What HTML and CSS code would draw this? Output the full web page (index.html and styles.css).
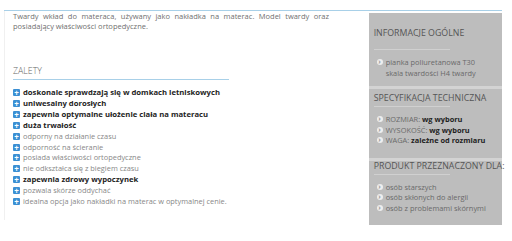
FILE: index.html
```html
<!DOCTYPE html>
<html lang="pl">
<head>
    <meta charset="UTF-8">
    <title>Twardy wkład do materaca</title>
    <link rel="stylesheet" href="styles.css">
</head>
<body>
    <div class="product">
        <div class="main">
            <p class="intro">Twardy wkład do materaca, używany jako nakładka na materac. Model twardy oraz posiadający właściwości ortopedyczne.</p>
            <h3 class="section-title">ZALETY</h3>
            <ul class="pros">
                <li class="strong">doskonale sprawdzają się w domkach letniskowych</li>
                <li class="strong">uniwesalny dorosłych</li>
                <li class="strong">zapewnia optymalne ułożenie ciała na materacu</li>
                <li class="strong">duża trwałość</li>
                <li>odporny na działanie czasu</li>
                <li>odporność na ścieranie</li>
                <li>posiada właściwości ortopedyczne</li>
                <li>nie odkształca się z biegiem czasu</li>
                <li class="strong">zapewnia zdrowy wypoczynek</li>
                <li>pozwala skórze oddychać</li>
                <li>idealna opcja jako nakładki na materac w optymalnej cenie.</li>
            </ul>
        </div>
        <div class="sidebar">
            <div class="box box-general">
                <h4>INFORMACJE OGÓLNE</h4>
                <ul class="facts">
                    <li>pianka poliuretanowa T30<br>skala twardości H4 twardy</li>
                </ul>
            </div>
            <div class="box box-spec">
                <h4>SPECYFIKACJA TECHNICZNA</h4>
                <ul class="facts">
                    <li>ROZMIAR: <b>wg wyboru</b></li>
                    <li>WYSOKOŚĆ: <b>wg wyboru</b></li>
                    <li>WAGA: <b>zależne od rozmiaru</b></li>
                </ul>
            </div>
            <div class="box box-for">
                <h4>PRODUKT PRZEZNACZONY DLA:</h4>
                <ul class="facts">
                    <li>osób starszych</li>
                    <li>osób skłonych do alergii</li>
                    <li>osób z problemami skórnymi</li>
                </ul>
            </div>
        </div>
    </div>
</body>
</html>
```

FILE: styles.css
```css
body {
    margin: 0;
    font-family: "Open Sans", sans-serif;
    background-color: #fff;
    color: #777;
}
.product {
    display: flex;
    align-items: flex-start;
    width: 498px;
    margin: 10px 0 0 4px;
    border-top: 1px solid #a8d0e8;
}
.main {
    width: 354px;
    height: 209px;
    padding: 0 5px 0 8px;
    border-left: 1px solid #f0f0f0;
}
.intro {
    margin: 0;
    width: 316px;
    font-size: 7.5px;
    line-height: 10px;
    text-align: justify;
    color: #707070;
}
.section-title {
    width: 216px;
    margin: 35px 0 0 0;
    padding-bottom: 2px;
    font-size: 8.8px;
    font-weight: 300;
    line-height: 11px;
    color: #666;
    border-bottom: 1px solid #a8d0e8;
}
.pros {
    list-style: none;
    margin: 7px 0 0 0;
    padding: 0;
}
.pros li {
    position: relative;
    padding-left: 10px;
    font-size: 7.4px;
    line-height: 10.9px;
    color: #888;
}
.pros li::before {
    content: "+";
    position: absolute;
    left: 0;
    top: 2px;
    width: 7px;
    height: 7px;
    border-radius: 1px;
    background-color: #3b8fd3;
    color: #fff;
    font-size: 8px;
    font-weight: bold;
    line-height: 7px;
    text-align: center;
}
.pros li.strong {
    font-size: 7.7px;
    font-weight: bold;
    color: #1e1e1e;
}
.sidebar {
    width: 135px;
    margin-top: 2px;
    margin-left: 1px;
    background-color: #bdbdbd;
}
.box {
    padding: 2px 0 10px 5px;
    border-top: 3px solid #d3d3d3;
}
.box-general {
    border-top: none;
    padding-top: 15px;
    padding-bottom: 8px;
}
.box-spec {
    padding-top: 4px;
    padding-bottom: 12px;
}
.box-for {
    padding-top: 0;
    padding-bottom: 12px;
}
.box h4 {
    width: 76px;
    margin: 0;
    padding-bottom: 3px;
    font-size: 8.8px;
    font-weight: 400;
    line-height: 10px;
    color: #555;
    white-space: nowrap;
    border-bottom: 1px solid #d0d0d0;
}
.box-general h4 {
    padding-bottom: 11px;
}
.facts {
    list-style: none;
    margin: 7px 0 0 0;
    padding: 0 0 0 3px;
}
.facts li {
    position: relative;
    padding-left: 9px;
    font-size: 7.4px;
    line-height: 10.5px;
    color: #6a6a6a;
}
.facts li::before {
    content: "›";
    position: absolute;
    left: 0;
    top: 2px;
    width: 6px;
    height: 6px;
    border-radius: 50%;
    background-color: #eee;
    color: #999;
    font-size: 7px;
    font-weight: bold;
    line-height: 5px;
    text-align: center;
}
.facts b {
    color: #222;
}
```
